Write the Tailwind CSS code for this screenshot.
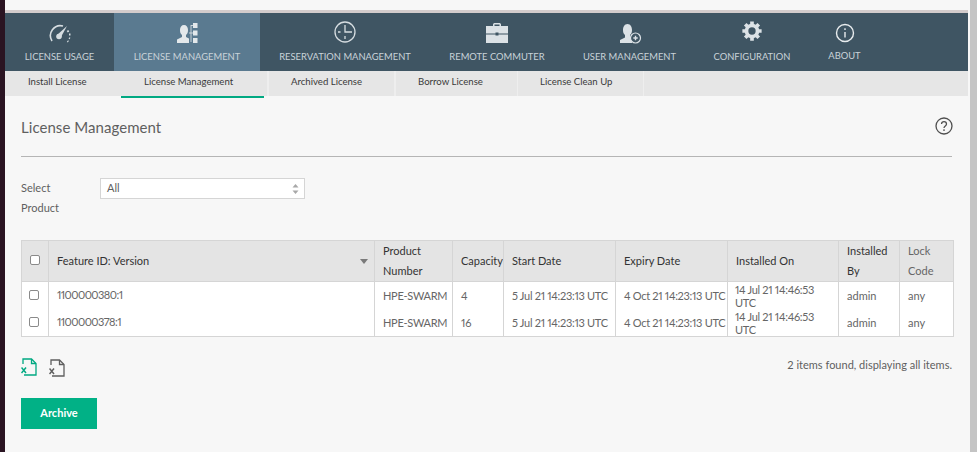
<!DOCTYPE html>
<html lang="en">
<head>
    <meta charset="UTF-8">
    <meta name="viewport" content="width=device-width, initial-scale=1.0">
    <title>License Management</title>
    <script src="https://cdn.jsdelivr.net/npm/@tailwindcss/browser@4"></script>
</head>
<body class="w-[977px] h-[452px] overflow-hidden flex bg-[#f7f7f7] font-['Lato',sans-serif] text-[#5f5f5f]">

    <!-- Desktop behind the window -->
    <div class="w-[5px] bg-[#2a1422] shrink-0"></div>

    <div class="w-[963px] shrink-0 flex flex-col">
        <div class="h-[10px] bg-[#f7f7f7]"></div>
        <div class="h-[3px] bg-[#d3cccc]"></div>

        <!-- Main nav -->
        <nav class="h-[58px] bg-[#3f5563] flex text-[9.4px] leading-[10px] text-[#c9d3d9]">
            <a class="w-[109px] flex flex-col items-center">
                <svg class="w-[24px] h-[24px] mt-[8px]" viewBox="0 0 24 24" fill="none" stroke="#d6dde1">
                    <path d="M4 20a10 10 0 0 1 11-15" stroke-width="1.6"/>
                    <path d="M9 14l10-9-6 11z" fill="#d6dde1" stroke="none"/>
                    <circle cx="11" cy="15.5" r="2.8" fill="#d6dde1" stroke="none"/>
                    <path d="M19.5 9.5l1 1.5M21 13.5h1.5M21 17l1 .5M19.5 20l.8.7" stroke-width="1.8"/>
                </svg>
                <span class="mt-[7px]">LICENSE USAGE</span>
            </a>
            <a class="w-[146px] flex flex-col items-center bg-[#5a7a90]">
                <svg class="w-[24px] h-[24px] mt-[8px]" viewBox="0 0 24 24" fill="#e3e8eb">
                    <path d="M2 22v-3.500l5-2.500v-2c-1.500-1-2-3-2-5 0-3 1.500-5 4-5s4 2 4 5c0 2-.5 4-2 5v2l3 1.500V22z"/>
                    <rect x="18" y="2" width="4.500" height="5"/>
                    <rect x="18" y="9.500" width="4.500" height="5"/>
                    <rect x="18" y="17" width="4.500" height="5"/>
                    <path d="M16 4v17M16 4.500h2M16 12h2M14 12h2" stroke="#e3e8eb" stroke-width=".8" fill="none"/>
                </svg>
                <span class="mt-[7px]">LICENSE MANAGEMENT</span>
            </a>
            <a class="w-[170px] flex flex-col items-center">
                <svg class="w-[24px] h-[24px] mt-[7px]" viewBox="0 0 24 24" fill="none" stroke="#d6dde1" stroke-width="1.3">
                    <circle cx="12" cy="12" r="10"/>
                    <path d="M12 5v7h7M5 12h2.500M12 16v3"/>
                </svg>
                <span class="mt-[8px]">RESERVATION MANAGEMENT</span>
            </a>
            <a class="w-[134px] flex flex-col items-center">
                <svg class="w-[24px] h-[24px] mt-[8px]" viewBox="0 0 24 24" fill="#dce2e6">
                    <path d="M8 5V3.500C8 2.500 9 2 10 2h4c1 0 2 .5 2 1.500V5h-1.500V3.500h-5V5z"/>
                    <path d="M1 5h22v7.500H13.500v-1h-3v1H1z"/>
                    <path d="M1 13.500h9.500v1h3v-1H23V22H1z"/>
                </svg>
                <span class="mt-[7px]">REMOTE COMMUTER</span>
            </a>
            <a class="w-[131px] flex flex-col items-center">
                <svg class="w-[24px] h-[24px] mt-[8px]" viewBox="0 0 24 24">
                    <path d="M2 22v-3l5-2.500V14c-1.500-1-2-3-2-5 0-3 1.500-6 4.500-6S14 6 14 9c0 2-.5 4-2 5v2.500l2 1V22z" fill="#dce2e6"/>
                    <circle cx="17.500" cy="17" r="5" fill="#3f5563" stroke="#dce2e6" stroke-width="1.200"/>
                    <path d="M15.300 17h4.400M17.500 14.800v4.400" stroke="#dce2e6" stroke-width="1.400"/>
                </svg>
                <span class="mt-[7px]">USER MANAGEMENT</span>
            </a>
            <a class="w-[114px] flex flex-col items-center">
                <svg class="w-[22px] h-[22px] mt-[7px] mb-[1px]" viewBox="0 0 24 24" fill="none" stroke="#dce2e6">
                    <circle cx="12" cy="12" r="6" stroke-width="4"/>
                    <path d="M12 1.500v4M12 18.500v4M1.500 12h4M18.500 12h4M4.600 4.600l2.800 2.800M16.600 16.600l2.800 2.800M4.600 19.400l2.800-2.800M16.600 7.400l2.800-2.800" stroke-width="4"/>
                </svg>
                <span class="mt-[9px]">CONFIGURATION</span>
            </a>
            <a class="w-[71px] flex flex-col items-center">
                <svg class="w-[20px] h-[20px] mt-[10px]" viewBox="0 0 20 20" fill="none" stroke="#e8ecee" stroke-width="1.400">
                    <circle cx="10" cy="10" r="8.500"/>
                    <path d="M10 9v5.500M10 5.300v1.700"/>
                </svg>
                <span class="mt-[8px]">ABOUT</span>
            </a>
        </nav>

        <!-- Sub nav -->
        <div class="h-[25px] bg-[#e6e6e6] flex text-[9.6px] leading-[14px] text-[#3a3a3a]">
            <a class="w-[114px] pl-[23px] pt-[4px]">Install License</a>
            <a class="ml-[2px] w-[143px] h-[27px] pl-[23px] pt-[4px] border-b-2 border-[#01a982]">License Management</a>
            <a class="ml-[3px] w-[127px] pl-[22px] pt-[4px] border-l-2 border-[#eeeeee]">Archived License</a>
            <a class="w-[123px] pl-[22px] pt-[4px] border-l-2 border-[#eeeeee]">Borrow License</a>
            <a class="w-[127px] pl-[22px] pt-[4px] border-x border-[#eeeeee]">License Clean Up</a>
        </div>

        <!-- Content -->
        <main class="px-[16px] flex-1">
            <div class="flex items-center justify-between h-[61px] pb-[2px] border-b border-[#b5b5b5]">
                <h1 class="text-[15px] mt-[5px] tracking-[0.05px] text-[#5f5f5f]">License Management</h1>
                <svg class="w-[18px] h-[18px] mr-[-1px] mt-[2px]" viewBox="0 0 18 18" fill="none" stroke="#4f4f4f" stroke-width="1.300">
                    <circle cx="9" cy="9" r="8"/>
                    <path d="M6.500 7c0-1.500 1-2.400 2.500-2.400S11.500 5.500 11.500 7c0 1.800-2.500 2-2.500 4M9 12.300v1.600"/>
                </svg>
            </div>

            <div class="flex mt-[21px] h-[62px]">
                <label class="w-[79px] text-[11px] leading-[20px]">Select<br>Product</label>
                <div class="w-[205px] h-[21px] bg-white border border-[#d5d5d5] flex items-center justify-between pl-[6px] pr-[5px] text-[11px]">
                    <span>All</span>
                    <svg class="w-[7px] h-[12px]" viewBox="0 0 7 12" fill="#a8a8a8"><path d="M3.500 1L6.500 4.500H.5zM3.500 11L.5 7.500h6z"/></svg>
                </div>
            </div>

            <table class="table-fixed w-[932px] border-collapse border border-[#d5d5d5] text-[11px] text-[#666666] proportional-nums">
                <colgroup>
                    <col class="w-[27px]"><col class="w-[326px]"><col class="w-[78px]"><col class="w-[51px]"><col class="w-[112px]"><col class="w-[112px]"><col class="w-[111px]"><col class="w-[61px]"><col class="w-[54px]">
                </colgroup>
                <thead class="bg-[#e4e4e4] text-[#333333] leading-[20px] text-left">
                    <tr class="h-[41px] font-normal">
                        <th class="border border-[#d5d5d5] font-normal pl-[8px]"><span class="block w-[10px] h-[10px] bg-white border border-[#8a8a8a] rounded-[2px] mb-[2px]"></span></th>
                        <th class="border border-[#d5d5d5] font-normal pl-[8px]">
                            <div class="flex items-center justify-between pr-[6px]">Feature ID: Version
                                <svg class="w-[8px] h-[5px]" viewBox="0 0 8 5" fill="#7a7a7a"><path d="M0 0h8L4 5z"/></svg>
                            </div>
                        </th>
                        <th class="border border-[#d5d5d5] font-normal pl-[8px]">Product<br>Number</th>
                        <th class="border border-[#d5d5d5] font-normal pl-[8px] whitespace-nowrap overflow-hidden">Capacity</th>
                        <th class="border border-[#d5d5d5] font-normal pl-[8px]">Start Date</th>
                        <th class="border border-[#d5d5d5] font-normal pl-[8px]">Expiry Date</th>
                        <th class="border border-[#d5d5d5] font-normal pl-[8px]">Installed On</th>
                        <th class="border border-[#d5d5d5] font-normal pl-[8px]">Installed<br>By</th>
                        <th class="border border-[#d5d5d5] font-normal pl-[8px] text-[#666666]">Lock<br>Code</th>
                    </tr>
                </thead>
                <tbody class="bg-white">
                    <tr class="h-[27.5px]">
                        <td class="border-r border-[#d5d5d5] pl-[7px] pb-[1px]"><span class="block w-[10px] h-[10px] border border-[#8a8a8a] rounded-[2px]"></span></td>
                        <td class="border-r border-[#d5d5d5] pl-[8px] tracking-[-0.55px]">1100000380:1</td>
                        <td class="border-r border-[#d5d5d5] pl-[8px] pt-[2px] tracking-[-0.3px]">HPE-SWARM</td>
                        <td class="border-r border-[#d5d5d5] pl-[8px] pt-[2px]">4</td>
                        <td class="border-r border-[#d5d5d5] pl-[8px] pt-[2px] tracking-[-0.3px] whitespace-nowrap">5 Jul 21 14:23:13 UTC</td>
                        <td class="border-r border-[#d5d5d5] pl-[8px] pt-[2px] tracking-[-0.3px] whitespace-nowrap">4 Oct 21 14:23:13 UTC</td>
                        <td class="border-r border-[#d5d5d5] pl-[7px] tracking-[-0.3px] leading-[13px]">14 Jul 21 14:46:53<br>UTC</td>
                        <td class="border-r border-[#d5d5d5] pl-[8px] pt-[2px]">admin</td>
                        <td class="pl-[8px] pt-[2px]">any</td>
                    </tr>
                    <tr class="h-[27.5px]">
                        <td class="border-r border-[#d5d5d5] pl-[7px] pb-[1px]"><span class="block w-[10px] h-[10px] border border-[#8a8a8a] rounded-[2px]"></span></td>
                        <td class="border-r border-[#d5d5d5] pl-[8px] tracking-[-0.55px]">1100000378:1</td>
                        <td class="border-r border-[#d5d5d5] pl-[8px] pt-[2px] tracking-[-0.3px]">HPE-SWARM</td>
                        <td class="border-r border-[#d5d5d5] pl-[8px] pt-[2px]">16</td>
                        <td class="border-r border-[#d5d5d5] pl-[8px] pt-[2px] tracking-[-0.3px] whitespace-nowrap">5 Jul 21 14:23:13 UTC</td>
                        <td class="border-r border-[#d5d5d5] pl-[8px] pt-[2px] tracking-[-0.3px] whitespace-nowrap">4 Oct 21 14:23:13 UTC</td>
                        <td class="border-r border-[#d5d5d5] pl-[7px] tracking-[-0.3px] leading-[13px]">14 Jul 21 14:46:53<br>UTC</td>
                        <td class="border-r border-[#d5d5d5] pl-[8px] pt-[2px]">admin</td>
                        <td class="pl-[8px] pt-[2px]">any</td>
                    </tr>
                </tbody>
            </table>

            <div class="flex items-center justify-between mt-[19px] h-[22px]">
                <div class="flex gap-[12px]">
                    <svg class="w-[16px] h-[18px]" viewBox="0 0 16 18" fill="none" stroke="#01a982" stroke-width="1.300">
                        <path d="M2 6V1h8.500L15 5.500V17H3"/>
                        <path d="M10.500 1v4.500H15"/>
                        <path d="M0.500 9.500l4.500 5.500M5 9.500L.5 15" stroke-width="1.500"/>
                    </svg>
                    <svg class="w-[16px] h-[18px] mt-[1px]" viewBox="0 0 16 18" fill="none" stroke="#5f5f5f" stroke-width="1.300">
                        <path d="M2 6V1h8.500L15 5.500V17H3"/>
                        <path d="M10.500 1v4.500H15"/>
                        <path d="M0.500 9.500l4.500 5.500M5 9.500L.5 15" stroke-width="1.500"/>
                    </svg>
                </div>
                <p class="text-[11px] mt-[-4px]">2 items found, displaying all items.</p>
            </div>

            <button class="block mt-[20px] w-[76px] h-[31px] bg-[#01b186] text-white text-[11px] font-bold">Archive</button>
        </main>
    </div>

    <!-- Window scrollbar -->
    <div class="w-[2px] shrink-0"></div>
    <div class="w-[7px] shrink-0 bg-[#c4c4c4]"></div>

</body>
</html>
